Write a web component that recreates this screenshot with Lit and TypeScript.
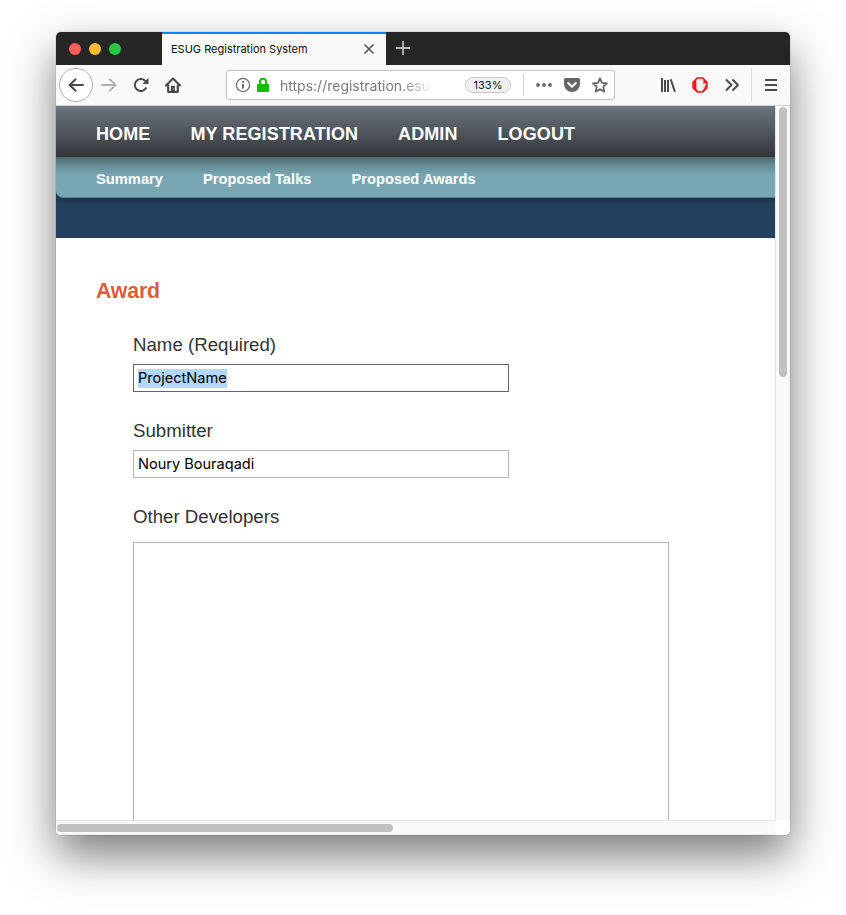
import { LitElement, html, css, svg } from "lit";
import { customElement } from "lit/decorators.js";

const icon = (size: number, body: unknown) =>
  html`<svg width=${size} height=${size} viewBox="0 0 16 16" fill="none" stroke="currentColor" stroke-width="2">${body}</svg>`;

const icons = {
  back: icon(16, svg`<path d="M15 8H1.8M7.6 2.2 1.6 8l6 5.8" stroke-linecap="round" stroke-linejoin="round"/>`),
  forward: icon(16, svg`<path d="M1 8h13.2M8.6 2.2l6 5.8-6 5.8" stroke-width="1.8" stroke-linecap="round" stroke-linejoin="round"/>`),
  reload: icon(16, svg`<path d="M13.3 10.5A6 6 0 1 1 12 3.7l1.3 1.5" stroke-width="2"/><path d="M15.5.9v6.1H9.4z" fill="currentColor" stroke="none"/>`),
  home: icon(16, svg`<path d="M1 8.400 8 1.500l7 6.900" stroke-width="2.100" stroke-linecap="round" stroke-linejoin="round"/><path d="M3.200 7.500v7.300h9.600V7.500" stroke-width="2.200" stroke-linejoin="round"/><path d="M6 15V8.800h4V15z" fill="currentColor" stroke="none"/><path d="M8.300 12h1" stroke="#f9f9fa" stroke-width="1"/>`),
  info: icon(16, svg`<circle cx="8" cy="8" r="6.6" stroke-width="1.2"/><path d="M8 7v4.6" stroke-width="1.9"/><circle cx="8" cy="4.8" r="1.1" fill="currentColor" stroke="none"/>`),
  lock: icon(16, svg`<path d="M5 8V4.8a3 3 0 0 1 6 0V8"/><rect x="2" y="7" width="12" height="8" rx="1" fill="currentColor" stroke="none"/>`),
  dots: icon(16, svg`<g fill="currentColor" stroke="none"><circle cx="2" cy="8" r="1.900"/><circle cx="8" cy="8" r="1.900"/><circle cx="14" cy="8" r="1.900"/></g>`),
  pocket: icon(16, svg`<path d="M1.6 1h12.8Q16 1 16 2.600V7A8 8 0 0 1 0 7V2.600Q0 1 1.600 1z" fill="currentColor" stroke="none"/><path d="m4.200 6 3.800 3.700L11.800 6" stroke="#fff" stroke-linecap="round" stroke-linejoin="round"/>`),
  star: icon(16, svg`<path d="m8 1.300 2 4.500 5 .6-3.700 3.300 1 4.900L8 12.200l-4.300 2.400 1-4.900L1 6.400l5-.6z" stroke-width="1.800" stroke-linejoin="round"/>`),
  library: icon(16, svg`<path d="M2 1v14M5 3v12M8 3v12" stroke-width="2"/><path d="m10.700 2.200 4.200 12.500" stroke-width="2"/>`),
  block: icon(16, svg`<path d="M5.200 1h5.600L15 5.200v5.600L10.800 15H5.200L1 10.800V5.200z" fill="#e9dada" stroke="#ee1414" stroke-width="1.500"/><path d="M4.300 3.200v9l2.400 2.600H4.800L1.600 11V5zM11.500 2.500v4.300l1.600-1 1 1.200-1.600 4-2.400 3.400 1.500-.1 3-3V5z" fill="#ee1414" stroke="none"/><path d="M5 5.300 7 3l3.300 1v4.500l1.800-1.200-2.400 5.500H7l-2-2.500z" fill="#f4f1f1" stroke="none"/>`),
  more: icon(16, svg`<path d="m2.500 3 5 5-5 5M9 3l5 5-5 5" stroke-width="1.900" stroke-linecap="round" stroke-linejoin="round"/>`),
  menu: icon(16, svg`<path d="M2 3h12M2 8h12M2 13h12" stroke-linecap="butt"/>`),
  close: icon(12, svg`<path d="m2 2 12 12M14 2 2 14" stroke-width="2.200"/>`),
  plus: icon(16, svg`<path d="M8 1v14M1 8h14" stroke-width="1.800"/>`),
};

@customElement("browser-chrome")
class BrowserChrome extends LitElement {
  static styles = css`
    :host { display: block; font-family: Inter, sans-serif; color: #0c0c0d; }
    svg { display: block; flex: none; }
    .tabs { display: flex; height: 33px; background: #252525; }
    .lights { display: flex; gap: 8px; width: 106px; padding: 11px 0 0 13px; box-sizing: border-box; }
    .light { width: 12px; height: 12px; border-radius: 50%; }
    .red { background: #ff5f57; }
    .yellow { background: #ffbd2e; }
    .green { background: #28c940; }
    .tab { display: flex; align-items: center; justify-content: space-between; box-sizing: border-box; width: 224px; height: 33px; padding: 0 11px 1px 9px; border-top: 2px solid #0a84ff; background: #f9f9fa; font-size: 11px; color: #555; }
    .title { color: #0c0c0d; white-space: nowrap; }
    .new { display: flex; align-items: center; padding: 0 0 1px 9px; color: #b9b9b9; }
    .bar { display: flex; align-items: center; box-sizing: border-box; height: 41px; padding: 0 3px 0 4px; border-bottom: 1px solid #cfcfd0; background: #f9f9fa; color: #4a4a4b; }
    .button { display: grid; place-items: center; flex: none; width: 32px; height: 32px; }
    .round { box-sizing: border-box; width: 34px; height: 34px; margin: 0 0 0 -1px; border: 1px solid #b0b0b1; border-radius: 50%; background: #fff; }
    .dim { color: #b0b0b0; }
    .url { display: flex; align-items: center; flex: none; box-sizing: border-box; width: 389px; height: 30px; margin: 0 37px; padding: 0 6px 0 8px; border: 1px solid #c3c3c4; border-radius: 3px; background: #fff; box-shadow: 0 1px 4px rgba(0,0,0,.05); color: #666; }
    .lock { margin: 0 9px 0 4px; color: #12bc00; }
    .address { flex: none; width: 149px; margin-right: 36px; white-space: nowrap; font-size: 14px; color: #7a7a7a; mask-image: linear-gradient(90deg, #000 122px, transparent 152px); }
    .zoom { display: grid; place-items: center; box-sizing: border-box; flex: none; width: 46px; height: 16px; border: 1px solid #c8c8c9; border-radius: 8px; background: #f0f0f0; font-size: 11px; color: #151515; }
    .rule { flex: none; width: 1px; height: 22px; margin: 0 12px; background: #d4d4d5; }
    .icons { display: flex; gap: 12px; }
    .divider { flex: none; width: 1px; height: 34px; margin: 0 3px; background: #dcdcdd; }
  `;
  render() {
    return html`
      <div class="tabs">
        <div class="lights"><i class="light red"></i><i class="light yellow"></i><i class="light green"></i></div>
        <div class="tab"><span class="title">ESUG Registration System</span>${icons.close}</div>
        <div class="new">${icons.plus}</div>
      </div>
      <div class="bar">
        <div class="button round">${icons.back}</div>
        <div class="button dim">${icons.forward}</div>
        <div class="button">${icons.reload}</div>
        <div class="button">${icons.home}</div>
        <div class="url">
          ${icons.info}<span class="lock">${icons.lock}</span>
          <span class="address">https://registration.esu</span>
          <span class="zoom">133%</span><i class="rule"></i>
          <div class="icons">${icons.dots}${icons.pocket}${icons.star}</div>
        </div>
        <div class="button">${icons.library}</div>
        <div class="button">${icons.block}</div>
        <div class="button">${icons.more}</div>
        <i class="divider"></i>
        <div class="button">${icons.menu}</div>
      </div>`;
  }
}

@customElement("award-page")
class AwardPage extends LitElement {
  static styles = css`
    :host { display: block; overflow: hidden; background: #fff; font-family: "Liberation Sans", Arial, sans-serif; }
    .nav, .subnav { display: flex; gap: 40px; padding-left: 40px; box-sizing: border-box; color: #fff; font-weight: bold; white-space: nowrap; }
    .nav { height: 51px; line-height: 56px; font-size: 18px; letter-spacing: .09px; background: linear-gradient(#727c85 0, #666e77 5px, #383c40 47px, #393a3e); }
    .band { height: 81px; background: #24415f; }
    .subnav { height: 41px; line-height: 45px; font-size: 14.67px; letter-spacing: .03px; border-bottom: 1px solid #577f8d; border-bottom-left-radius: 7px; background: linear-gradient(#4d686e 0, #638b94 8px, #78a7b2 18px); box-shadow: 0 2px 8px rgba(0,0,0,.35); }
    .title { margin: 40px 0 0 40px; font-size: 21.3px; line-height: 26px; letter-spacing: -.15px; color: #d75f3f; }
    .form { margin: 27px 0 0 77px; color: #333; font-size: 18.67px; }
    .label { display: block; height: 33px; line-height: 27px; }
    .field { display: flex; align-items: center; box-sizing: border-box; width: 376px; height: 28px; margin-bottom: 25px; padding-left: 4px; border: 1px solid #b5b5b5; font: 14.55px Inter, sans-serif; color: #000; }
    .focused { border-color: #636363; }
    .selected { background: #b3d7ff; line-height: 19px; }
    .area { box-sizing: border-box; width: 536px; height: 400px; margin-top: 6px; border: 1px solid #b5b5b5; }
  `;
  render() {
    return html`
      <div class="nav"><span>HOME</span><span>MY REGISTRATION</span><span>ADMIN</span><span>LOGOUT</span></div>
      <div class="band"><div class="subnav"><span>Summary</span><span>Proposed Talks</span><span>Proposed Awards</span></div></div>
      <h1 class="title">Award</h1>
      <div class="form">
        <label class="label">Name (Required)</label>
        <div class="field focused"><span class="selected">ProjectName</span></div>
        <label class="label">Submitter</label>
        <div class="field"><span>Noury Bouraqadi</span></div>
        <label class="label">Other Developers</label>
        <div class="area"></div>
      </div>`;
  }
}

@customElement("app-root")
class AppRoot extends LitElement {
  static styles = css`
    :host { display: block; box-sizing: border-box; width: 846px; height: 915px; padding: 32px 56px 80px; overflow: hidden; background: #fff; }
    .window { width: 734px; height: 803px; border-radius: 5px; box-shadow: 0 0 1px rgba(0,0,0,.6), 0 20px 46px rgba(0,0,0,.53); }
    .clip { height: 803px; overflow: hidden; border-radius: 5px; background: #fff; }
    .view { display: grid; grid-template: 714px 15px / 719px 15px; }
    .vertical { box-sizing: border-box; padding: 1px 0 0 3px; border-left: 1px solid #e6e6e6; border-right: 1px solid #ececec; background: #fafafa; }
    .horizontal { box-sizing: border-box; padding: 3px 0 0 1px; border-top: 1px solid #e6e6e6; border-bottom: 1px solid #ececec; background: #fafafa; }
    .thumb { border-radius: 4px; background: #c1c1c1; }
    .tall { width: 8px; height: 270px; }
    .wide { width: 336px; height: 8px; }
  `;
  render() {
    return html`
      <div class="window"><div class="clip">
        <browser-chrome></browser-chrome>
        <div class="view">
          <award-page></award-page>
          <div class="vertical"><div class="thumb tall"></div></div>
          <div class="horizontal"><div class="thumb wide"></div></div>
        </div>
      </div></div>`;
  }
}
